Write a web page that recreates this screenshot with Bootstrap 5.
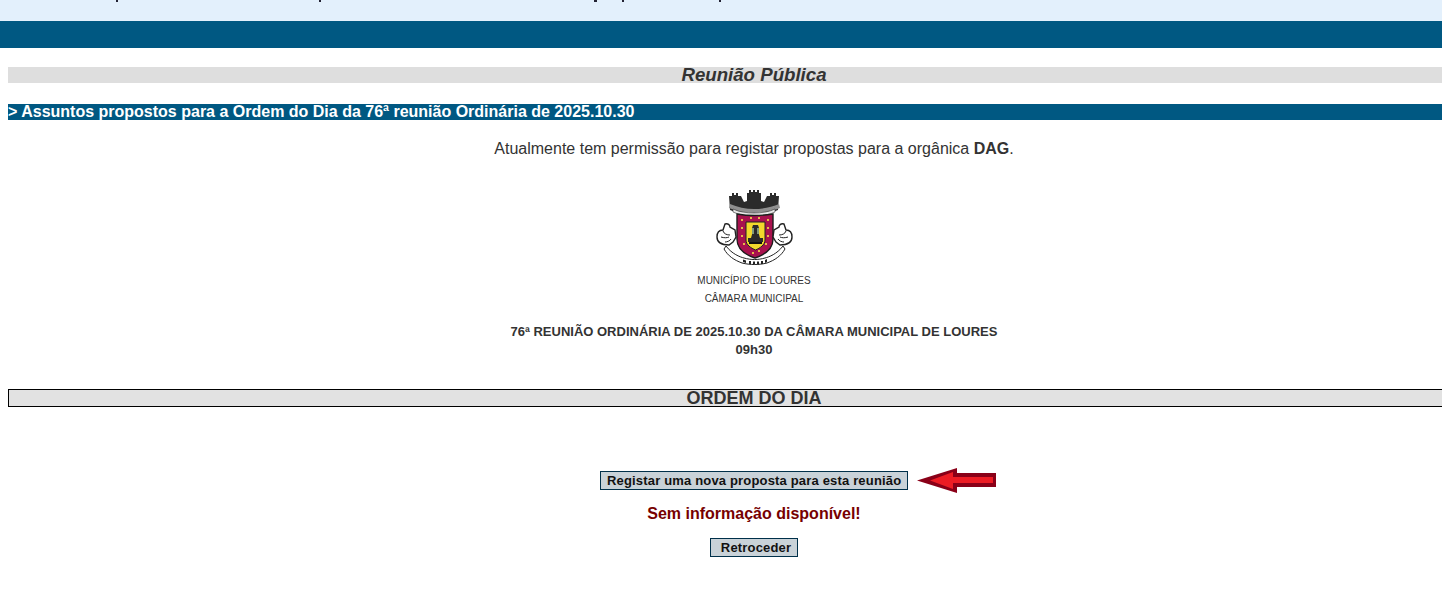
<!DOCTYPE html>
<html lang="pt">
<head>
  <meta charset="UTF-8">
  <title>Reunião Pública</title>
  <link href="https://cdn.jsdelivr.net/npm/bootstrap@5.3.3/dist/css/bootstrap.min.css" rel="stylesheet">
  <style>
    html, body { overflow: hidden; height: 614px; }
    body { font-family: "Liberation Sans", Arial, sans-serif; color: #333; background: #fff; }
    .top-strip { height: 21px; background: #e3f0fc; }
    .top-strip svg { display: block; }
    .top-bar { height: 27px; background: #005882; }
    .page-area { width: 1492px; margin: 19px 0 0 8px; }
    .title-bar { height: 16px; line-height: 16px; background: #dedede; font-size: 14pt; font-weight: bold; font-style: italic; }
    .sub-bar { height: 16px; line-height: 15px; margin-top: 21px; background: #005882; color: #fff; font-size: 16px; font-weight: bold; }
    .perm-text { margin-top: 19px; font-size: 16px; line-height: 19px; }
    .crest { display: block; margin: 32px auto 0; }
    .muni-text { margin-top: 7px; font-size: 10px; line-height: 18px; }
    .meeting-text { margin-top: 15px; font-size: 13px; line-height: 18px; font-weight: bold; }
    .order-bar { height: 18px; line-height: 16px; margin-top: 30px; background: #e2e2e2; border: 1px solid #000; font-size: 18px; font-weight: bold; }
    .old-btn { background: #c9d2d8; border: 1px solid #00304a; color: #111; font-family: inherit; font-size: 13px; font-weight: bold; line-height: 15px; padding: 1px 6px; border-radius: 0; letter-spacing: .17px; }
    .btn-row { margin-top: 64px; height: 19px; padding-left: 592px; }
    .red-arrow { margin-left: 8px; flex: none; }
    .no-info { margin-top: 14px; font-size: 16px; line-height: 19px; font-weight: bold; color: #700; }
    .back-row { margin-top: 12px; }
    .back-btn { padding: 1px 6px 1px 10px; }
  </style>
</head>
<body>
  <div class="top-strip">
    <svg width="1442" height="3" viewBox="0 0 1442 3">
      <path d="M116 0h2v2h-2zM319 0h2v2h-2zM594 0h3v2h-3zM622 0h2v2h-2zM719 0h2v2h-2z" fill="#223"/>
    </svg>
  </div>
  <div class="top-bar"></div>
  <div class="page-area">
    <div class="title-bar text-center">Reunião Pública</div>
    <div class="sub-bar">&gt; Assuntos propostos para a Ordem do Dia da 76ª reunião Ordinária de 2025.10.30</div>
    <div class="perm-text text-center">Atualmente tem permissão para registar propostas para a orgânica <b>DAG</b>.</div>
    <svg class="crest" width="77" height="75" viewBox="0 0 77 75">
      <!-- coroa -->
      <path d="M13 6h3V3h2v2h2V3h2v3h3l3 6 3-1V3h2V0h2v2h2V0h2v2h2V0h2v3h2v8l3 1 3-6h3V3h2v2h2V3h2v3h3l-1 14-5 2H19l-5-2z" fill="#2b2b2b"/>
      <path d="M14 14c7 3 16 5 24 5s18-2 25-5l1 4c-7 3-17 5-26 5s-18-2-25-5z" fill="#8f8f8f"/>
      <path d="M17 19c6 3 14 4 21 4s15-1 21-4v3c-6 3-14 4-21 4s-15-1-21-4z" fill="#e8e8e8" stroke="#333" stroke-width=".6"/>
      <!-- escudo -->
      <path d="M21 24c11 2 24 2 36 0v25c0 11-9 16-18 19-9-3-18-8-18-19z" fill="#a8124e" stroke="#1d1d1d" stroke-width="1.4"/>
      <path d="M25 29h2v2h-2zM25 37h2v2h-2zM25 45h2v2h-2zM27 53h2v2h-2zM51 29h2v2h-2zM51 37h2v2h-2zM51 45h2v2h-2zM49 53h2v2h-2zM34 27h2v2h-2zM42 27h2v2h-2zM36 62h2v2h-2zM42 60h2v2h-2z" fill="#e6b94a"/>
      <path d="M30 32h19v18c0 5-5 8-9.500 10-4.500-2-9.500-5-9.500-10z" fill="#f2d82c" stroke="#222"/>
      <path d="M37 35h5l1 3-1 3 2 7h3v4H32v-4h3l2-7-1-3z" fill="#2a2a2a"/>
      <path d="M36 38h2v6h-2zM41 38h2v6h-2z" fill="#7f9a7a"/>
      <path d="M33 52h13v2H33z" fill="#111"/>
      <!-- mãos -->
      <path d="M1 47c0-5 3-7 6-7l2-6c3-1 5 1 5 3l5 3 1 7-3 5-4 3c-6 0-12-2-12-8z" fill="#fff" stroke="#222" stroke-width="1.4"/>
      <path d="M7 41c1 3 4 4 7 4M5 47c3 1 6 1 8 0M9 52c2 0 5-1 6-3" fill="none" stroke="#222"/>
      <path d="M76 47c0-5-3-7-6-7l-2-6c-3-1-5 1-5 3l-5 3-1 7 3 5 4 3c6 0 12-2 12-8z" fill="#fff" stroke="#222" stroke-width="1.4"/>
      <path d="M70 41c-1 3-4 4-7 4M72 47c-3 1-6 1-8 0M68 52c-2 0-5-1-6-3" fill="none" stroke="#222"/>
      <!-- fita -->
      <path d="M10 56c6 8 14 11 18 12 7 2 14 2 21 0 4-1 12-4 18-12l2 3c-4 7-10 11-18 14-8 2-17 2-25 0-8-3-14-7-18-14z" fill="#fff" stroke="#222"/>
      <path d="M27 69.500l3 1v2.500l-3-1zM33 71h2v3h-2zM37 71.500h2v3h-2zM41 71.500h2v3h-2zM45 71h2v3h-2zM49 70l2-1v3l-2 1z" fill="#222"/>
    </svg>
    <div class="muni-text text-center">MUNICÍPIO DE LOURES<br>CÂMARA MUNICIPAL</div>
    <div class="meeting-text text-center">76ª REUNIÃO ORDINÁRIA DE 2025.10.30 DA CÂMARA MUNICIPAL DE LOURES<br>09h30</div>
    <div class="order-bar text-center">ORDEM DO DIA</div>
    <div class="btn-row d-flex align-items-center">
      <button type="button" class="old-btn">Registar uma nova proposta para esta reunião</button>
      <svg class="red-arrow" width="81" height="25" viewBox="0 0 81 25">
        <path d="M1 12.500 41 0v5h39v14H41v6z" fill="#8a0018"/>
        <path d="M14 12.500 37 4v5h40v6H37v6z" fill="#ed1c24"/>
      </svg>
    </div>
    <div class="no-info text-center">Sem informação disponível!</div>
    <div class="back-row text-center"><button type="button" class="old-btn back-btn">Retroceder</button></div>
  </div>
  <script src="https://cdn.jsdelivr.net/npm/bootstrap@5.3.3/dist/js/bootstrap.bundle.min.js"></script>
</body>
</html>
